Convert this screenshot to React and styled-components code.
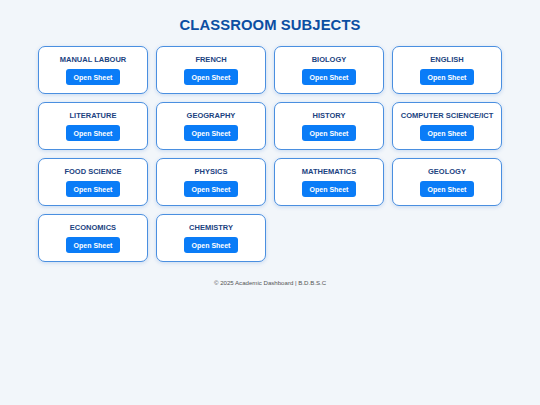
import styled, { createGlobalStyle } from "styled-components"

const Global = createGlobalStyle`
  html, body {
    margin: 0;
    padding: 0;
    background-color: #f2f6fa;
    font-family: "Liberation Sans", Arial, sans-serif;
  }
`

const Page = styled.div`
  width: 464px;
  margin: 0 auto;
  padding-top: 16px;
`
const Title = styled.h1`
  margin: 0 0 12px;
  text-align: center;
  color: #0b4ea2;
  font-size: 14.8px;
  font-weight: bold;
  letter-spacing: 0.1px;
  line-height: 18px;
`
const Grid = styled.div`
  display: grid;
  grid-template-columns: repeat(4, 1fr);
  gap: 8px;
`
const Card = styled.div`
  background-color: #fff;
  border: 1.5px solid #4a8fe0;
  border-radius: 7px;
  box-shadow: 0 1px 4px rgba(0, 90, 200, 0.18);
  height: 48px;
  box-sizing: border-box;
  display: flex;
  flex-direction: column;
  align-items: center;
  padding-top: 8px;
`
const Subject = styled.div`
  color: #1b437f;
  font-size: 7.5px;
  font-weight: bold;
  line-height: 9px;
  margin-bottom: 5px;
  text-transform: uppercase;
`
const Btn = styled.button`
  background-color: #0a7cf7;
  color: #fff;
  border: 0;
  border-radius: 3px;
  width: 54px;
  height: 16px;
  padding: 0;
  font-family: inherit;
  font-size: 7px;
  font-weight: bold;
`
const Footer = styled.div`
  text-align: center;
  color: #555;
  font-size: 6.1px;
  margin-top: 17px;
`

const subjects = [
  "Manual Labour", "French", "Biology", "English",
  "Literature", "Geography", "History", "Computer Science/ICT",
  "Food Science", "Physics", "Mathematics", "Geology",
  "Economics", "Chemistry",
]

export default function App() {
  return (
    <Page>
      <Global />
      <Title>CLASSROOM SUBJECTS</Title>
      <Grid>
        {subjects.map(s => (
          <Card key={s}>
            <Subject>{s}</Subject>
            <Btn>Open Sheet</Btn>
          </Card>
        ))}
      </Grid>
      <Footer>© 2025 Academic Dashboard | B.D.B.S.C</Footer>
    </Page>
  )
}
